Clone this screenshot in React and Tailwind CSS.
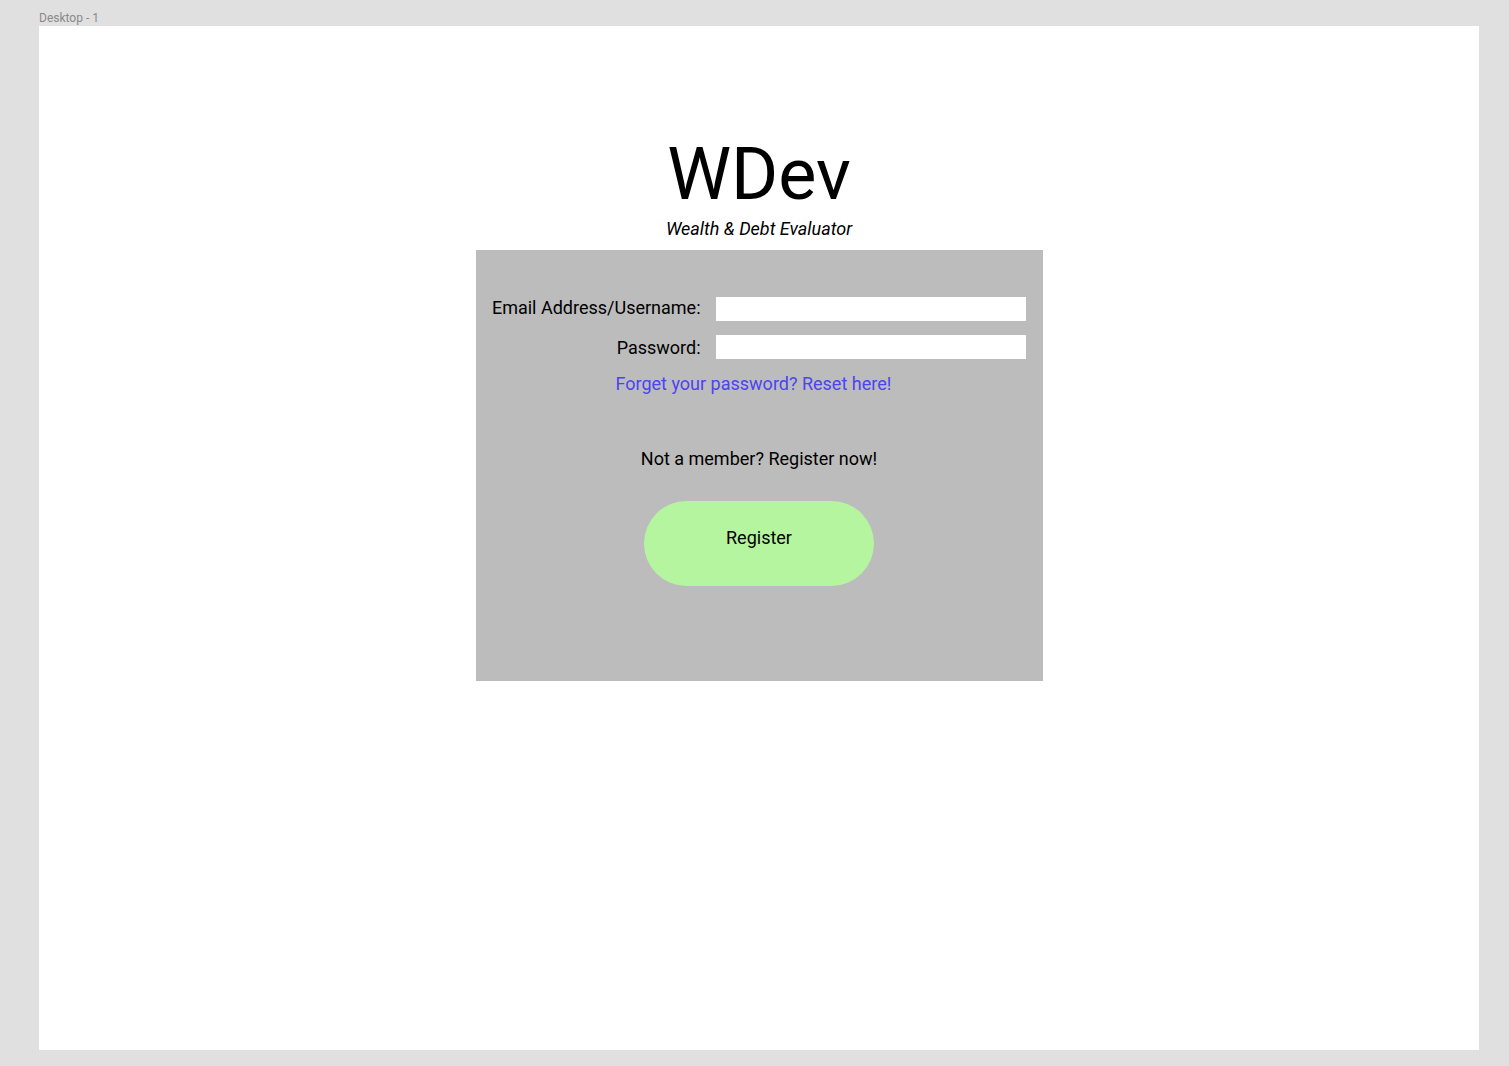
import React, { useState } from "react";

export default function App() {
  const [email, setEmail] = useState("");
  const [password, setPassword] = useState("");

  return (
    <div
      className="min-h-[1066px] w-[1509px] bg-[#e0e0e0] pl-[39px]"
      style={{ fontFamily: "Roboto, 'Liberation Sans', sans-serif" }}
    >
      {/* Frame label */}
      <div className="h-[26px] pt-[11px] text-[12px] leading-[14px] text-[#8a8a8a]">
        Desktop - 1
      </div>

      {/* Frame */}
      <div className="w-[1440px] h-[1024px] bg-white flex flex-col items-center pt-[106px]">
        <h1 className="text-[72px] leading-[86px] font-normal text-black">WDev</h1>
        <p className="italic text-[18px] leading-[22px] text-black">
          Wealth &amp; Debt Evaluator
        </p>

        {/* Login panel */}
        <div className="mt-[10px] w-[567px] h-[431px] bg-[#bcbcbc] flex flex-col pt-[47px]">
          <div className="flex items-center h-[24px]">
            <label className="w-[240px] h-[24px] pr-[15px] text-right text-[18px] leading-[22px] text-black">
              Email Address/Username:
            </label>
            <input
              type="text"
              value={email}
              onChange={(e) => setEmail(e.target.value)}
              className="w-[310px] h-[24px] bg-white outline-none px-1 text-sm"
            />
          </div>
          <div className="flex items-center h-[24px] mt-[14px]">
            <label className="w-[240px] h-[24px] pr-[15px] text-right text-[18px] leading-[26px] text-black">
              Password:
            </label>
            <input
              type="password"
              value={password}
              onChange={(e) => setPassword(e.target.value)}
              className="w-[310px] h-[24px] bg-white outline-none px-1 text-sm"
            />
          </div>
          <a
            href="#"
            className="pl-[140px] mt-[13px] text-[18px] leading-[24px] text-[#4b44f2]"
          >
            Forget your password? Reset here!
          </a>

          <p className="mt-[51px] text-center text-[18px] leading-[24px] text-black">
            Not a member? Register now!
          </p>

          <div className="flex justify-center mt-[30px]">
            <button className="w-[230px] h-[85px] rounded-full bg-[#b5f5a0] text-[18px] leading-[24px] text-black pb-[12px]">
              Register
            </button>
          </div>
        </div>
      </div>
    </div>
  );
}
